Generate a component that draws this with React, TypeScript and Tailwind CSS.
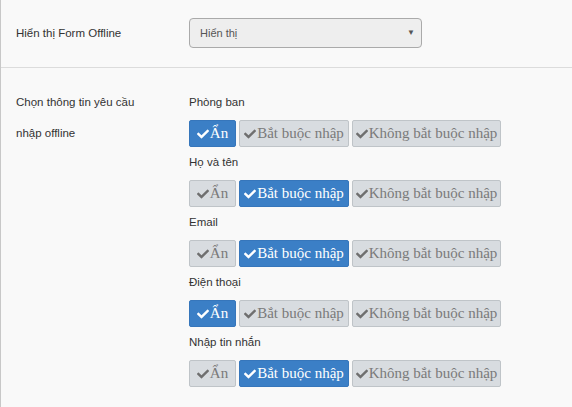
import React from "react";
import { FaCheck } from "react-icons/fa";

type Opt = 0 | 1 | 2;

const rows: { label: string; sel: Opt }[] = [
  { label: "Phòng ban", sel: 0 },
  { label: "Họ và tên", sel: 1 },
  { label: "Email", sel: 1 },
  { label: "Điện thoại", sel: 0 },
  { label: "Nhập tin nhắn", sel: 1 },
];

const opts = [
  { text: "Ẩn", w: "w-[47px]" },
  { text: "Bắt buộc nhập", w: "w-[110px]" },
  { text: "Không bắt buộc nhập", w: "w-[149px]" },
];

function Btn({ text, w, active }: { text: string; w: string; active: boolean }) {
  return (
    <div
      className={
        "h-[27px] flex items-center justify-center whitespace-nowrap rounded-[2px] border text-[15px] leading-none " +
        w +
        (active
          ? " bg-[#3b7fc6] border-[#3676bb] text-white"
          : " bg-[#d8dce0] border-[#bfc4c8] text-[#7a7a7a]")
      }
      style={{ fontFamily: '"Liberation Serif", "Times New Roman", serif' }}
    >
      <FaCheck className={"w-[12px] h-[12px] mr-[1px] " + (active ? "text-white" : "text-[#6f6f6f]")} />
      <span>{text}</span>
    </div>
  );
}

export default function App() {
  return (
    <div
      className="w-[572px] h-[407px] bg-[#f9f9f9] border-l border-[#c8c8c8] overflow-hidden text-[#333] text-[11.5px]"
      style={{ fontFamily: '"Liberation Sans", Arial, sans-serif' }}
    >
      <div className="flex items-center h-[67px] pl-[15px]">
        <div className="w-[173px]">Hiển thị Form Offline</div>
        <div className="w-[233px] h-[30px] mt-[-1px] rounded-[4px] border border-[#aaaaaa] bg-[#eeeeee] flex items-center justify-between pl-[10px] pr-[6px] text-[#555]">
          <span className="text-[11px]">Hiển thị</span>
          <span className="text-[8px] text-[#555]">▼</span>
        </div>
      </div>
      <div className="h-px bg-[#dcdcdc]" />
      <div className="flex pl-[15px] pt-[28px]">
        <div className="w-[173px] leading-[31px] mt-[-9px]">
          <div>Chọn thông tin yêu cầu</div>
          <div>nhập offline</div>
        </div>
        <div className="flex flex-col">
          {rows.map((r, i) => (
            <div key={i} className="flex flex-col h-[60px]">
              <div className="h-[24px] leading-[13px]">{r.label}</div>
              <div className="flex gap-[3px]">
                {opts.map((o, j) => (
                  <Btn key={j} text={o.text} w={o.w} active={r.sel === j} />
                ))}
              </div>
            </div>
          ))}
        </div>
      </div>
    </div>
  );
}
